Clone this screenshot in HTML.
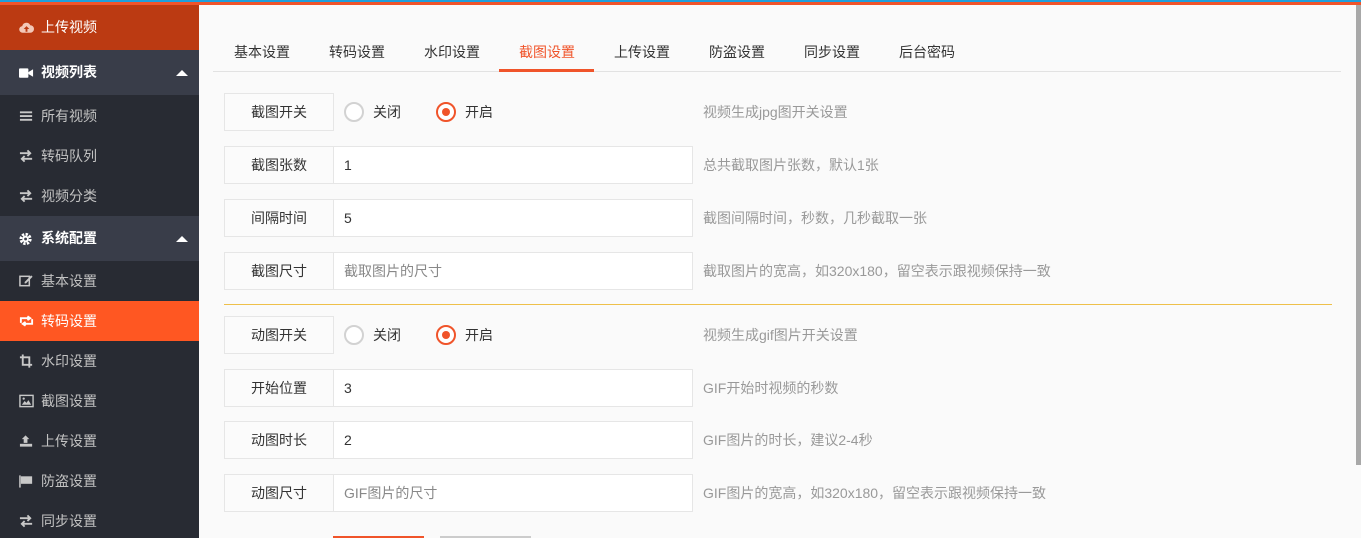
<!DOCTYPE html>
<html><head><meta charset="utf-8"><style>
*{margin:0;padding:0;box-sizing:border-box}
html,body{width:1361px;height:538px;overflow:hidden}
body{background:#fafafa;font-family:"Liberation Sans","Noto Sans CJK SC",sans-serif;font-size:14px;color:#333;position:relative}
.top1{position:absolute;left:0;top:0;width:1361px;height:2px;background:#1e9fdc}
.top2{position:absolute;left:0;top:2px;width:1361px;height:3px;background:#f0542a}
.side{position:absolute;left:0;top:5px;width:199px;height:533px;background:#282b33}
.it{position:absolute;left:0;width:199px;height:40px;line-height:40px;padding-left:41px;color:#c2c2c2;font-size:14px;white-space:nowrap}
.ic{position:absolute;left:19px;top:13px;width:15px;height:14px}
.hd{background:#393d49;color:#fff;height:45px;line-height:45px;font-weight:bold}
.hd .ic{top:16px}
.arr{position:absolute;right:11px;top:20px;width:0;height:0;border-left:6px solid transparent;border-right:6px solid transparent;border-bottom:6px solid #fff}
.scroll{position:absolute;left:1356px;top:5px;width:5px;height:460px;background:#a8a8a8}
.tabs{position:absolute;left:213px;top:71px;width:1128px;height:1px;background:#e2e2e2}
.tab{position:absolute;top:42px;font-size:14px;color:#333;white-space:nowrap}
.row{position:absolute;left:224px;height:38px;width:1000px}
.lab{position:absolute;left:0;top:0;width:110px;height:38px;border:1px solid #e6e6e6;background:#fbfbfb;text-align:center;line-height:36px}
.inp{position:absolute;left:109px;top:0;width:360px;height:38px;border:1px solid #e6e6e6;background:#fff;line-height:36px;padding-left:10px}
.ph{color:#888}
.tip{position:absolute;left:479px;top:0;line-height:38px;color:#999;white-space:nowrap}
.rad{position:absolute;top:9px;width:20px;height:20px;border-radius:50%;border:2px solid #d2d2d2;background:#fff}
.rad.on{border-color:#f0542a}
.rad.on:after{content:"";position:absolute;left:4px;top:4px;width:8px;height:8px;border-radius:50%;background:#f0542a}
.rl{position:absolute;top:0;line-height:38px;white-space:nowrap}
</style></head><body>
<div class="top1"></div><div class="top2"></div>
<div class="side">
<div class="it" style="top:0;height:45px;line-height:45px;background:#bb3a12;color:#fff"><svg class="ic" style="top:16px" viewBox="0 0 16 14"><path d="M4 12a3.5 3.5 0 0 1-.5-7A4.5 4.5 0 0 1 12 4a3.5 3.5 0 0 1 0 8z" fill="#f3c8b8"/><path d="M8 5l-3 3h2v3h2V8h2z" fill="#bb3a12"/></svg>上传视频</div>
<div class="it hd" style="top:45px"><svg class="ic" viewBox="0 0 16 14"><rect x="0" y="2" width="10" height="10" rx="1" fill="#fff"/><path d="M10 6l5-3v8l-5-3z" fill="#fff"/></svg>视频列表<i class="arr"></i></div>
<div class="it" style="top:91px"><svg class="ic" viewBox="0 0 16 14"><path d="M1 2h13v2H1zM1 6h13v2H1zM1 10h13v2H1z" fill="#c8c8c8"/></svg>所有视频</div>
<div class="it" style="top:131px"><svg class="ic" viewBox="0 0 16 14"><path d="M1 4h11M9 1l3 3-3 3M14 10H3M6 7l-3 3 3 3" stroke="#c8c8c8" stroke-width="2" fill="none"/></svg>转码队列</div>
<div class="it" style="top:171px"><svg class="ic" viewBox="0 0 16 14"><path d="M1 4h11M9 1l3 3-3 3M14 10H3M6 7l-3 3 3 3" stroke="#c8c8c8" stroke-width="2" fill="none"/></svg>视频分类</div>
<div class="it hd" style="top:211px"><svg class="ic" viewBox="0 0 16 14"><circle cx="7" cy="7" r="5" fill="none" stroke="#fff" stroke-width="3" stroke-dasharray="2.5 1.4"/><circle cx="7" cy="7" r="3.5" fill="#fff"/><circle cx="7" cy="7" r="1.5" fill="#393d49"/></svg>系统配置<i class="arr"></i></div>
<div class="it" style="top:256px"><svg class="ic" viewBox="0 0 16 14"><rect x="1" y="2" width="10" height="10" fill="none" stroke="#c8c8c8" stroke-width="1.6"/><path d="M6 8l7-7 1.5 1.5-7 7H6z" fill="#c8c8c8"/></svg>基本设置</div>
<div class="it" style="top:296px;background:#ff5722;color:#fff"><svg class="ic" viewBox="0 0 16 14"><path d="M2 9V4h9M9 2l3 2-3 2M14 5v5H5M7 8l-3 2 3 2" stroke="#fff" stroke-width="2" fill="none"/></svg>转码设置</div>
<div class="it" style="top:336px"><svg class="ic" viewBox="0 0 16 14"><path d="M4 0v11h10M1 3h10v11" stroke="#c8c8c8" stroke-width="2" fill="none"/></svg>水印设置</div>
<div class="it" style="top:376px"><svg class="ic" viewBox="0 0 16 14"><rect x="1" y="1" width="14" height="12" fill="none" stroke="#c8c8c8" stroke-width="1.5"/><path d="M3 11l3-4 2 2 2-3 3 5z" fill="#c8c8c8"/><circle cx="5" cy="4.5" r="1.2" fill="#c8c8c8"/></svg>截图设置</div>
<div class="it" style="top:416px"><svg class="ic" viewBox="0 0 16 14"><path d="M7 1l4 4H9v4H5V5H3z" fill="#c8c8c8"/><rect x="1" y="10" width="13" height="3" fill="#c8c8c8"/></svg>上传设置</div>
<div class="it" style="top:456px"><svg class="ic" viewBox="0 0 16 14"><path d="M1 1v13" stroke="#c8c8c8" stroke-width="1.6"/><path d="M2 2h12v8H2z" fill="#c8c8c8"/></svg>防盗设置</div>
<div class="it" style="top:496px"><svg class="ic" viewBox="0 0 16 14"><path d="M1 4h11M9 1l3 3-3 3M14 10H3M6 7l-3 3 3 3" stroke="#c8c8c8" stroke-width="2" fill="none"/></svg>同步设置</div>
</div>
<div class="scroll"></div>
<div class="tab" style="left:234px">基本设置</div>
<div class="tab" style="left:329px">转码设置</div>
<div class="tab" style="left:424px">水印设置</div>
<div class="tab" style="left:519px;color:#f0542a">截图设置</div>
<div class="tab" style="left:614px">上传设置</div>
<div class="tab" style="left:709px">防盗设置</div>
<div class="tab" style="left:804px">同步设置</div>
<div class="tab" style="left:899px">后台密码</div>
<div class="tabs"></div>
<div style="position:absolute;left:499px;top:69px;width:95px;height:3px;background:#f0542a"></div>

<div class="row" style="top:93px"><div class="lab">截图开关</div>
<div class="rad" style="left:120px"></div><div class="rl" style="left:149px">关闭</div>
<div class="rad on" style="left:212px"></div><div class="rl" style="left:241px">开启</div>
<div class="tip">视频生成jpg图开关设置</div></div>
<div class="row" style="top:146px"><div class="lab">截图张数</div><div class="inp">1</div><div class="tip">总共截取图片张数，默认1张</div></div>
<div class="row" style="top:199px"><div class="lab">间隔时间</div><div class="inp">5</div><div class="tip">截图间隔时间，秒数，几秒截取一张</div></div>
<div class="row" style="top:252px"><div class="lab">截图尺寸</div><div class="inp ph">截取图片的尺寸</div><div class="tip">截取图片的宽高，如320x180，留空表示跟视频保持一致</div></div>
<div style="position:absolute;left:224px;top:304px;width:1108px;height:1px;background:#eec04a"></div>
<div class="row" style="top:316px"><div class="lab">动图开关</div>
<div class="rad" style="left:120px"></div><div class="rl" style="left:149px">关闭</div>
<div class="rad on" style="left:212px"></div><div class="rl" style="left:241px">开启</div>
<div class="tip">视频生成gif图片开关设置</div></div>
<div class="row" style="top:369px"><div class="lab">开始位置</div><div class="inp">3</div><div class="tip">GIF开始时视频的秒数</div></div>
<div class="row" style="top:421px"><div class="lab">动图时长</div><div class="inp">2</div><div class="tip">GIF图片的时长，建议2-4秒</div></div>
<div class="row" style="top:474px"><div class="lab">动图尺寸</div><div class="inp ph">GIF图片的尺寸</div><div class="tip">GIF图片的宽高，如320x180，留空表示跟视频保持一致</div></div>
<div style="position:absolute;left:333px;top:536px;width:91px;height:2px;background:#f0542a"></div>
<div style="position:absolute;left:440px;top:536px;width:91px;height:2px;background:#ccc"></div>
</body></html>
